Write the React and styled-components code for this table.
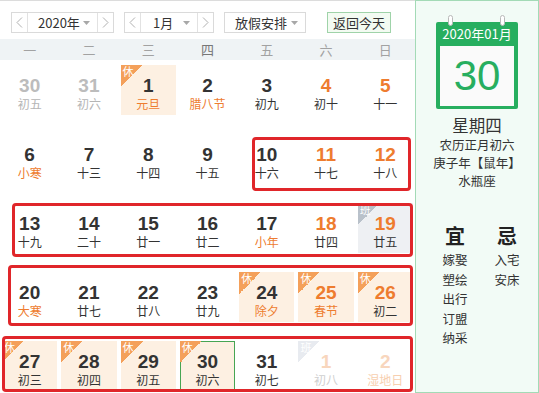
import React from 'react';
import styled, { createGlobalStyle } from 'styled-components';

const GlobalStyle = createGlobalStyle`
  body {
    margin: 0;
    background: #fff;
    font-family: "Liberation Sans", "Noto Sans CJK SC", sans-serif;
    color: #333;
  }
`;

const ORANGE = '#ee7c2f';
const GREEN = '#27ae5f';

const Page = styled.div`
  display: flex;
  width: 539px;
  height: 393px;
  overflow: hidden;
`;

const Main = styled.div`
  position: relative;
  width: 415px;
  flex-shrink: 0;
`;

const Toolbar = styled.div`
  display: flex;
  align-items: flex-start;
  gap: 10px;
  height: 39px;
  box-sizing: border-box;
  padding: 11px 0 0 11px;
  border-top: 1px solid #dcdcdc;
`;

const SelectGroup = styled.div`
  display: flex;
  height: 21px;
  box-sizing: border-box;
  border: 1px solid #dadada;
  background: #fff;
`;

const ArrowBtn = styled.div`
  width: 15px;
  display: flex;
  align-items: center;
  justify-content: center;
  border-left: ${({ side }) => (side === 'right' ? '1px solid #e2e2e2' : 'none')};
  border-right: ${({ side }) => (side === 'left' ? '1px solid #e2e2e2' : 'none')};
`;

const SelectLabel = styled.div`
  width: ${({ w }) => w}px;
  display: flex;
  align-items: center;
  justify-content: space-between;
  box-sizing: border-box;
  padding: 0 7px 0 ${({ pl }) => pl}px;
  font-size: 13px;
  color: #333;
  font-family: "Noto Sans CJK SC", sans-serif;
`;

const Caret = styled.svg`
  width: 7px;
  height: 4px;
  flex-shrink: 0;
`;

const TodayBtn = styled.div`
  margin-left: 11px;
  height: 21px;
  box-sizing: border-box;
  padding: 0 5px;
  display: flex;
  align-items: center;
  border: 1px solid #9fd3a9;
  background: #f3fbf2;
  font-size: 13px;
  font-family: "Noto Sans CJK SC", sans-serif;
  color: #333;
`;

const WeekBar = styled.div`
  display: grid;
  grid-template-columns: repeat(7, 1fr);
  height: 21px;
  background: #eff3f5;
`;

const WeekDay = styled.div`
  display: flex;
  align-items: center;
  justify-content: center;
  font-size: 13px;
  font-family: "Noto Sans CJK SC", sans-serif;
  color: ${({ today }) => (today ? '#777' : '#a2a2a2')};
`;

const Grid = styled.div`
  display: grid;
  grid-template-columns: repeat(7, 1fr);
  grid-auto-rows: 50px;
  row-gap: 19px;
  padding-top: 5px;
`;

const Slot = styled.div`
  padding: 0 2px;
`;

const Cell = styled.div`
  position: relative;
  height: 100%;
  box-sizing: border-box;
  display: flex;
  flex-direction: column;
  align-items: center;
  background: ${({ kind }) =>
    kind === 'rest' ? '#fdf0e2' : kind === 'work' ? '#eef0f3' : 'transparent'};
  border: 1px solid ${({ selected }) => (selected ? '#47a553' : 'transparent')};
`;

const Num = styled.div`
  margin-top: 9px;
  line-height: 22px;
  font-size: 19px;
  font-weight: bold;
  color: ${({ color }) => color};
`;

const Lunar = styled.div`
  line-height: 14px;
  font-size: 12px;
  font-family: "Noto Sans CJK SC", sans-serif;
  color: ${({ color }) => color};
`;

const Tag = styled.div`
  position: absolute;
  left: -1px;
  top: -1px;
  width: 22px;
  height: 22px;
  background: linear-gradient(135deg, ${({ bg }) => bg} 50%, transparent 50%);
  color: #fff;
  font-size: 11px;
  line-height: 13px;
  padding-left: 2px;
  box-sizing: border-box;
  font-family: "Noto Sans CJK SC", sans-serif;
`;

const Mark = styled.div`
  position: absolute;
  border: 3px solid #e0262a;
  border-radius: 4px;
  box-sizing: border-box;
  pointer-events: none;
`;

const Panel = styled.div`
  width: 124px;
  height: 393px;
  box-sizing: border-box;
  border: 1px solid #a3dab6;
  background: #f2fbf6;
  display: flex;
  flex-direction: column;
  align-items: center;
  font-family: "Noto Sans CJK SC", sans-serif;
  color: #333;
`;

const CalIcon = styled.div`
  position: relative;
  margin-top: 21px;
  width: 82px;
  height: 87px;
  box-sizing: border-box;
  padding: 0 4px 3px;
  background: ${GREEN};
  border-radius: 2px;
  display: flex;
  flex-direction: column;
`;

const Ring = styled.div`
  position: absolute;
  top: -7px;
  left: ${({ x }) => x}px;
  width: 5px;
  height: 11px;
  box-sizing: border-box;
  border: 1px solid #b9b9b9;
  border-radius: 3px;
  background: #fff;
`;

const CalHead = styled.div`
  height: 24px;
  line-height: 24px;
  text-align: center;
  color: #fff;
  font-size: 13px;
`;

const CalDay = styled.div`
  flex: 1;
  background: #fafafa;
  display: flex;
  align-items: center;
  justify-content: center;
  color: ${GREEN};
  font-family: "Liberation Sans", sans-serif;
  font-size: 42px;
`;

const InfoLine = styled.div`
  line-height: ${({ big }) => (big ? 22 : 18)}px;
  font-size: ${({ big }) => (big ? 16.5 : 12.5)}px;
  margin-top: ${({ mt }) => mt || 0}px;
`;

const YiJi = styled.div`
  display: grid;
  grid-template-columns: 44px 44px;
  column-gap: 8px;
  margin-top: 34px;
  padding-left: 8px;
`;

const YiCol = styled.div`
  display: flex;
  flex-direction: column;
  align-items: center;
`;

const YiHead = styled.div`
  font-size: 20px;
  font-weight: bold;
  line-height: 24px;
  margin-bottom: 2px;
  color: #222;
`;

const YiItem = styled.div`
  font-size: 12.5px;
  line-height: 19.5px;
`;

const Chevron = ({ dir }) => (
  <svg width="7" height="11" viewBox="0 0 7 11">
    <polyline
      points={dir === 'left' ? '6,0.5 1,5.5 6,10.5' : '1,0.5 6,5.5 1,10.5'}
      fill="none"
      stroke="#b0b0b0"
      strokeWidth="1"
    />
  </svg>
);

const CaretDown = () => (
  <Caret viewBox="0 0 7 4">
    <polygon points="0,0 7,0 3.5,4" fill="#a8a8a8" />
  </Caret>
);

const DARK = '#333';
const FADE = '#bcbcbc';

// kind: rest (休) / work (班); o = other month
const days = [
  { n: 30, l: '初五', o: 1 }, { n: 31, l: '初六', o: 1 },
  { n: 1, l: '元旦', lc: ORANGE, kind: 'rest' }, { n: 2, l: '腊八节', lc: ORANGE },
  { n: 3, l: '初九' }, { n: 4, l: '初十', we: 1 }, { n: 5, l: '十一', we: 1 },
  { n: 6, l: '小寒', lc: ORANGE }, { n: 7, l: '十三' }, { n: 8, l: '十四' }, { n: 9, l: '十五' },
  { n: 10, l: '十六' }, { n: 11, l: '十七', we: 1 }, { n: 12, l: '十八', we: 1 },
  { n: 13, l: '十九' }, { n: 14, l: '二十' }, { n: 15, l: '廿一' }, { n: 16, l: '廿二' },
  { n: 17, l: '小年', lc: ORANGE }, { n: 18, l: '廿四', we: 1 }, { n: 19, l: '廿五', we: 1, kind: 'work' },
  { n: 20, l: '大寒', lc: ORANGE }, { n: 21, l: '廿七' }, { n: 22, l: '廿八' }, { n: 23, l: '廿九' },
  { n: 24, l: '除夕', lc: ORANGE, kind: 'rest' }, { n: 25, l: '春节', lc: ORANGE, we: 1, kind: 'rest' },
  { n: 26, l: '初二', we: 1, kind: 'rest' },
  { n: 27, l: '初三', kind: 'rest' }, { n: 28, l: '初四', kind: 'rest' }, { n: 29, l: '初五', kind: 'rest' },
  { n: 30, l: '初六', kind: 'rest', selected: 1 }, { n: 31, l: '初七' },
  { n: 1, l: '初八', o: 2, faintTag: 1 }, { n: 2, l: '湿地日', o: 2, lc: '#f7cfb0' },
];

const marks = [
  { left: 252, top: 137, width: 159, height: 54 },
  { left: 12, top: 203, width: 401, height: 54 },
  { left: 8, top: 265, width: 405, height: 61 },
  { left: 2, top: 336, width: 411, height: 56 },
];

const DayCell = ({ d }) => {
  let numColor = d.we ? ORANGE : DARK;
  let lunarColor = d.lc || DARK;
  if (d.o === 1) {
    numColor = FADE;
    lunarColor = '#b5b5b5';
  }
  if (d.o === 2) {
    numColor = '#f8d6bd';
    lunarColor = d.lc || '#cfcfcf';
  }
  return (
    <Slot>
      <Cell kind={d.kind} selected={d.selected}>
        {d.kind === 'rest' && <Tag bg="#f4a05a">休</Tag>}
        {d.kind === 'work' && <Tag bg="#b9c1ca">班</Tag>}
        {d.faintTag && <Tag bg="#e8ebf0">班</Tag>}
        <Num color={numColor}>{d.n}</Num>
        <Lunar color={lunarColor}>{d.l}</Lunar>
      </Cell>
    </Slot>
  );
};

export default function App() {
  return (
    <Page>
      <GlobalStyle />
      <Main>
        <Toolbar>
          <SelectGroup>
            <ArrowBtn side="left"><Chevron dir="left" /></ArrowBtn>
            <SelectLabel w={69} pl={10}>2020年<CaretDown /></SelectLabel>
            <ArrowBtn side="right"><Chevron dir="right" /></ArrowBtn>
          </SelectGroup>
          <SelectGroup>
            <ArrowBtn side="left"><Chevron dir="left" /></ArrowBtn>
            <SelectLabel w={56} pl={12}>1月<CaretDown /></SelectLabel>
            <ArrowBtn side="right"><Chevron dir="right" /></ArrowBtn>
          </SelectGroup>
          <SelectGroup>
            <SelectLabel w={80} pl={10}>放假安排<CaretDown /></SelectLabel>
          </SelectGroup>
          <TodayBtn>返回今天</TodayBtn>
        </Toolbar>
        <WeekBar>
          {['一', '二', '三', '四', '五', '六', '日'].map((w) => (
            <WeekDay key={w} today={w === '四'}>{w}</WeekDay>
          ))}
        </WeekBar>
        <Grid>
          {days.map((d, i) => (
            <DayCell key={i} d={d} />
          ))}
        </Grid>
        {marks.map((m, i) => (
          <Mark key={i} style={m} />
        ))}
      </Main>
      <Panel>
        <CalIcon>
          <Ring x={12} />
          <Ring x={64} />
          <CalHead>2020年01月</CalHead>
          <CalDay>30</CalDay>
        </CalIcon>
        <InfoLine big mt={5}>星期四</InfoLine>
        <InfoLine>农历正月初六</InfoLine>
        <InfoLine>庚子年【鼠年】</InfoLine>
        <InfoLine>水瓶座</InfoLine>
        <YiJi>
          <YiCol>
            <YiHead>宜</YiHead>
            {['嫁娶', '塑绘', '出行', '订盟', '纳采'].map((t) => (
              <YiItem key={t}>{t}</YiItem>
            ))}
          </YiCol>
          <YiCol>
            <YiHead>忌</YiHead>
            {['入宅', '安床'].map((t) => (
              <YiItem key={t}>{t}</YiItem>
            ))}
          </YiCol>
        </YiJi>
      </Panel>
    </Page>
  );
}
